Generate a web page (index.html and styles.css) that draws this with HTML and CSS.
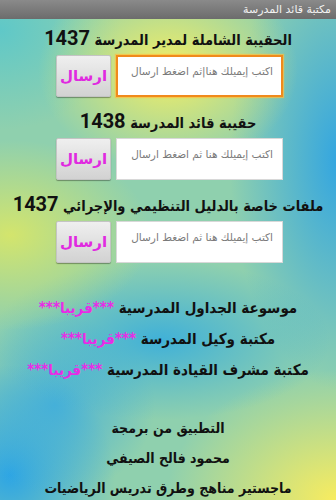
FILE: index.html
```html
<!DOCTYPE html>
<html lang="ar" dir="rtl">
<head>
<meta charset="utf-8">
<title>مكتبة قائد المدرسة</title>
<link rel="stylesheet" href="styles.css">
</head>
<body>
<div class="titlebar">مكتبة قائد المدرسة</div>
<main class="content">
  <section class="item">
    <h2 class="heading">الحقيبة الشاملة لمدير المدرسة <span class="num">1437</span></h2>
    <div class="row">
      <div class="field focused">اكتب إيميلك هنا|ثم اضغط ارسال</div>
      <button class="send">ارسال</button>
    </div>
  </section>
  <section class="item">
    <h2 class="heading">حقيبة قائد المدرسة <span class="num">1438</span></h2>
    <div class="row">
      <div class="field">اكتب إيميلك هنا ثم اضغط ارسال</div>
      <button class="send">ارسال</button>
    </div>
  </section>
  <section class="item">
    <h2 class="heading">ملفات خاصة بالدليل التنظيمي والإجرائي <span class="num">1437</span></h2>
    <div class="row">
      <div class="field">اكتب إيميلك هنا ثم اضغط ارسال</div>
      <button class="send">ارسال</button>
    </div>
  </section>
  <div class="soon">
    <p>موسوعة الجداول المدرسية <span class="mag">***قريبا***</span></p>
    <p>مكتبة وكيل المدرسة <span class="mag">***قريبا***</span></p>
    <p>مكتبة مشرف القيادة المدرسية <span class="mag">***قريبا***</span></p>
  </div>
  <div class="credits">
    <p>التطبيق من برمجة</p>
    <p>محمود فالح الصيفي</p>
    <p>ماجستير مناهج وطرق تدريس الرياضيات</p>
  </div>
</main>
</body>
</html>
```

FILE: styles.css
```css
html, body {
  margin: 0;
  padding: 0;
}
body {
  width: 336px;
  height: 500px;
  overflow: hidden;
  font-family: "DejaVu Sans Condensed", "DejaVu Sans", sans-serif;
  background:
    radial-gradient(ellipse 130px 100px at 168px 70px, rgba(250,240,95,0.95), rgba(250,240,95,0) 100%),
    radial-gradient(ellipse 140px 95px at 10px 235px, rgba(215,230,105,0.95), rgba(215,230,105,0) 100%),
    radial-gradient(ellipse 170px 80px at 160px 340px, rgba(60,175,218,0.95), rgba(60,175,218,0) 100%),
    radial-gradient(ellipse 100px 90px at 55px 405px, rgba(60,172,222,0.85), rgba(60,172,222,0) 100%),
    radial-gradient(ellipse 170px 130px at 336px 500px, rgba(248,236,95,1), rgba(248,236,95,0) 100%),
    radial-gradient(ellipse 105px 110px at 10px 475px, rgba(45,165,228,1), rgba(45,165,228,0) 100%),
    radial-gradient(ellipse 110px 230px at 340px 160px, rgba(50,165,225,1), rgba(50,165,225,0) 100%),
    radial-gradient(ellipse 120px 100px at 0px 30px, rgba(95,200,200,1), rgba(95,200,200,0) 100%),
    #8fd0ae;
}
.titlebar {
  height: 19px;
  background: linear-gradient(#8a8a8a, #6c6c6c);
  color: #f2f2f2;
  font-family: "DejaVu Sans", sans-serif;
  font-size: 11px;
  line-height: 19px;
  padding: 0 5px;
  text-align: right;
}
.content {
  padding-top: 6px;
  display: flex;
  flex-direction: column;
  align-items: center;
}
.item {
  display: flex;
  flex-direction: column;
  align-items: center;
  margin-bottom: 11px;
}
.heading {
  margin: 0 0 4px;
  height: 26px;
  line-height: 26px;
  font-size: 14.5px;
  font-weight: bold;
  color: #111;
  white-space: nowrap;
}
.num {
  font-family: Roboto, "Liberation Sans", sans-serif;
  font-size: 20px;
  font-weight: bold;
}
.row {
  display: flex;
  gap: 5px;
  margin-right: -3px;
}
.field {
  box-sizing: border-box;
  width: 167px;
  height: 42px;
  background: #fff;
  border: 1px solid #d8d8d8;
  color: #7a7a7a;
  font-family: "DejaVu Sans", sans-serif;
  font-size: 10.5px;
  padding: 9px 9px 0;
  text-align: right;
  white-space: nowrap;
  overflow: hidden;
}
.field.focused {
  border: 2px solid #f08a1c;
  box-shadow: 0 0 1px 1px rgba(255,190,60,0.7);
  padding: 8px 8px 0;
}
.send {
  box-sizing: border-box;
  width: 55px;
  height: 42px;
  border: 1px solid #c4c4c4;
  border-radius: 2px;
  background: linear-gradient(#efefef, #d2d2d2);
  box-shadow: 0 1px 1px rgba(0,0,0,0.35);
  color: #e02ae0;
  font-family: "DejaVu Sans", sans-serif;
  font-size: 15px;
  font-weight: bold;
  padding: 0;
}
.soon {
  margin-top: 19px;
  text-align: center;
}
.soon p {
  margin: 0;
  height: 31px;
  line-height: 31px;
  font-size: 15px;
  font-weight: bold;
  color: #111;
  white-space: nowrap;
}
.mag {
  color: #e82ce6;
}
.credits {
  margin-top: 27px;
  text-align: center;
}
.credits p {
  margin: 0;
  height: 30px;
  line-height: 30px;
  font-size: 14px;
  font-weight: bold;
  color: #111;
  white-space: nowrap;
}
```
